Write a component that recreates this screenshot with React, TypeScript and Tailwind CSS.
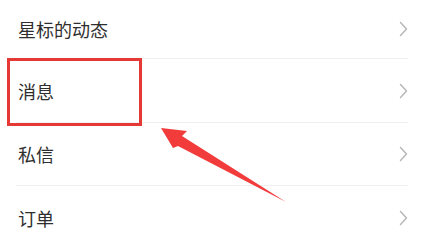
import React from "react";

const rows = [
  { label: "星标的动态", h: "h-[58px]" },
  { label: "消息", h: "h-[63px]" },
  { label: "私信", h: "h-[62px]" },
  { label: "订单", h: "h-[63px]" },
];

function Chevron() {
  return (
    <svg width="9" height="16" viewBox="0 0 9 16" className="shrink-0">
      <path d="M1.5 1.5 L7.5 8 L1.5 14.5" fill="none" stroke="#b5b5b5" strokeWidth="1.4" strokeLinecap="round" strokeLinejoin="round" />
    </svg>
  );
}

export default function App() {
  return (
    <div
      className="relative w-[424px] h-[241px] overflow-hidden bg-white"
      style={{ fontFamily: '"Noto Sans CJK SC", "Noto Sans", sans-serif' }}
    >
      <div className="flex flex-col">
        {rows.map((r, i) => (
          <div key={i} className="flex flex-col">
            <div className={`flex items-center justify-between pl-[18px] pr-[16px] ${r.h}`}>
              <span className="text-[18px] leading-none text-[#2e2e2e]">{r.label}</span>
              <Chevron />
            </div>
            {i < rows.length - 1 && <div className="mx-[16px] h-px bg-[#f0f0f0]" />}
          </div>
        ))}
      </div>
      <div className="absolute left-[7px] top-[58px] w-[135px] h-[68px] border-[3px] border-[#e53935]" />
      <svg className="absolute left-0 top-0" width="424" height="241" viewBox="0 0 424 241">
        <polygon
          points="161,128 187,131 182,136 286,202 178,146 173,148"
          fill="#f23b3b"
        />
      </svg>
    </div>
  );
}
